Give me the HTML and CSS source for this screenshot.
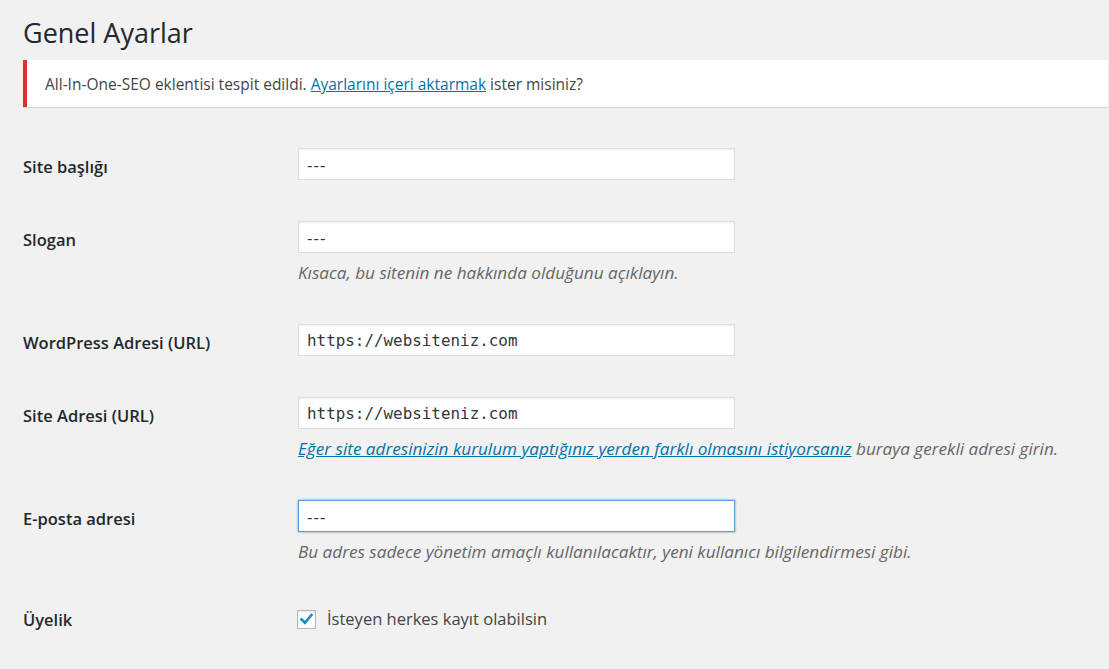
FILE: index.html
```html
<!DOCTYPE html>
<html lang="tr">
<head>
<meta charset="utf-8">
<title>Genel Ayarlar</title>
<link rel="stylesheet" href="styles.css">
</head>
<body>
<div class="wrap">
  <h1 class="title">Genel Ayarlar</h1>
  <div class="notice">
    <p>All-In-One-SEO eklentisi tespit edildi. <a href="#">Ayarlarını içeri aktarmak</a> ister misiniz?</p>
  </div>
  <form class="form">
    <div class="row">
      <div class="label">Site başlığı</div>
      <div class="field"><input class="input" type="text" value="---"></div>
    </div>
    <div class="row">
      <div class="label">Slogan</div>
      <div class="field">
        <input class="input" type="text" value="---">
        <p class="desc">Kısaca, bu sitenin ne hakkında olduğunu açıklayın.</p>
      </div>
    </div>
    <div class="row">
      <div class="label">WordPress Adresi (URL)</div>
      <div class="field"><input class="input code" type="text" value="https://websiteniz.com"></div>
    </div>
    <div class="row">
      <div class="label">Site Adresi (URL)</div>
      <div class="field">
        <input class="input code" type="text" value="https://websiteniz.com">
        <p class="desc"><a href="#">Eğer site adresinizin kurulum yaptığınız yerden farklı olmasını istiyorsanız</a> buraya gerekli adresi girin.</p>
      </div>
    </div>
    <div class="row">
      <div class="label">E-posta adresi</div>
      <div class="field">
        <input class="input focus" type="text" value="---">
        <p class="desc">Bu adres sadece yönetim amaçlı kullanılacaktır, yeni kullanıcı bilgilendirmesi gibi.</p>
      </div>
    </div>
    <div class="row check-row">
      <div class="label">Üyelik</div>
      <div class="field">
        <label class="check">
          <span class="box"><svg width="19" height="19" viewBox="0 0 19 19"><path d="M4 9.5 L7.8 13.2 L15 4.5" fill="none" stroke="#1e8cbe" stroke-width="3" stroke-linecap="square" stroke-linejoin="miter"/></svg></span>
          <span class="check-text">İsteyen herkes kayıt olabilsin</span>
        </label>
      </div>
    </div>
  </form>
</div>
</body>
</html>
```
FILE: styles.css
```css
html, body {
  margin: 0;
  padding: 0;
}
body {
  background: #f1f1f1;
  font-family: "Open Sans", "Noto Sans", sans-serif;
  color: #444;
}
.wrap {
  padding: 0 1px 40px 23px;
}
.title {
  margin: 0;
  padding-top: 14px;
  font-size: 27px;
  font-weight: 400;
  line-height: 38px;
  color: #23282d;
}
.notice {
  margin-top: 8px;
  background: #fff;
  border-left: 4px solid #dc3232;
  box-shadow: 0 1px 1px 0 rgba(0, 0, 0, 0.1);
  padding: 13px 15px 11px 18px;
}
.notice p {
  margin: 0;
  font-size: 15.5px;
  line-height: 23px;
}
a {
  color: #0073aa;
  text-decoration: underline;
}
.form {
  margin-top: 21px;
}
.row {
  display: flex;
  padding: 19px 0 20px;
}
.label {
  width: 262px;
  flex: none;
  padding-top: 9px;
  font-size: 16.5px;
  font-weight: 600;
  line-height: 22px;
  color: #23282d;
}
.check-row .label {
  padding-top: 7px;
}
.field {
  padding-left: 13px;
}
.input {
  display: block;
  box-sizing: border-box;
  width: 437px;
  height: 32px;
  margin: 1px 0;
  padding: 0 8px;
  border: 1px solid #ddd;
  background: #fff;
  box-shadow: inset 0 1px 2px rgba(0, 0, 0, 0.07);
  font-family: "Open Sans", "Noto Sans", sans-serif;
  font-size: 17px;
  letter-spacing: 1px;
  color: #32373c;
  outline: none;
}
.input.code {
  font-family: "DejaVu Sans Mono", "Liberation Mono", monospace;
  font-size: 15.9px;
  letter-spacing: 0;
}
.input.focus {
  border-color: #5b9dd9;
  box-shadow: 0 0 2px rgba(30, 140, 190, 0.8);
}
.desc {
  margin: 8px 0 0;
  font-size: 17.15px;
  font-style: italic;
  line-height: 23px;
  color: #666;
}
.check {
  display: flex;
  align-items: center;
  margin-top: 6px;
  font-size: 16.5px;
  line-height: 22px;
  color: #444;
}
.box {
  box-sizing: border-box;
  width: 19px;
  height: 19px;
  border: 1px solid #b4b9be;
  background: #fff;
  box-shadow: inset 0 1px 2px rgba(0, 0, 0, 0.1);
  display: flex;
  align-items: center;
  justify-content: center;
  margin-right: 11px;
  margin-left: -1px;
}
.box svg {
  display: block;
}
```
